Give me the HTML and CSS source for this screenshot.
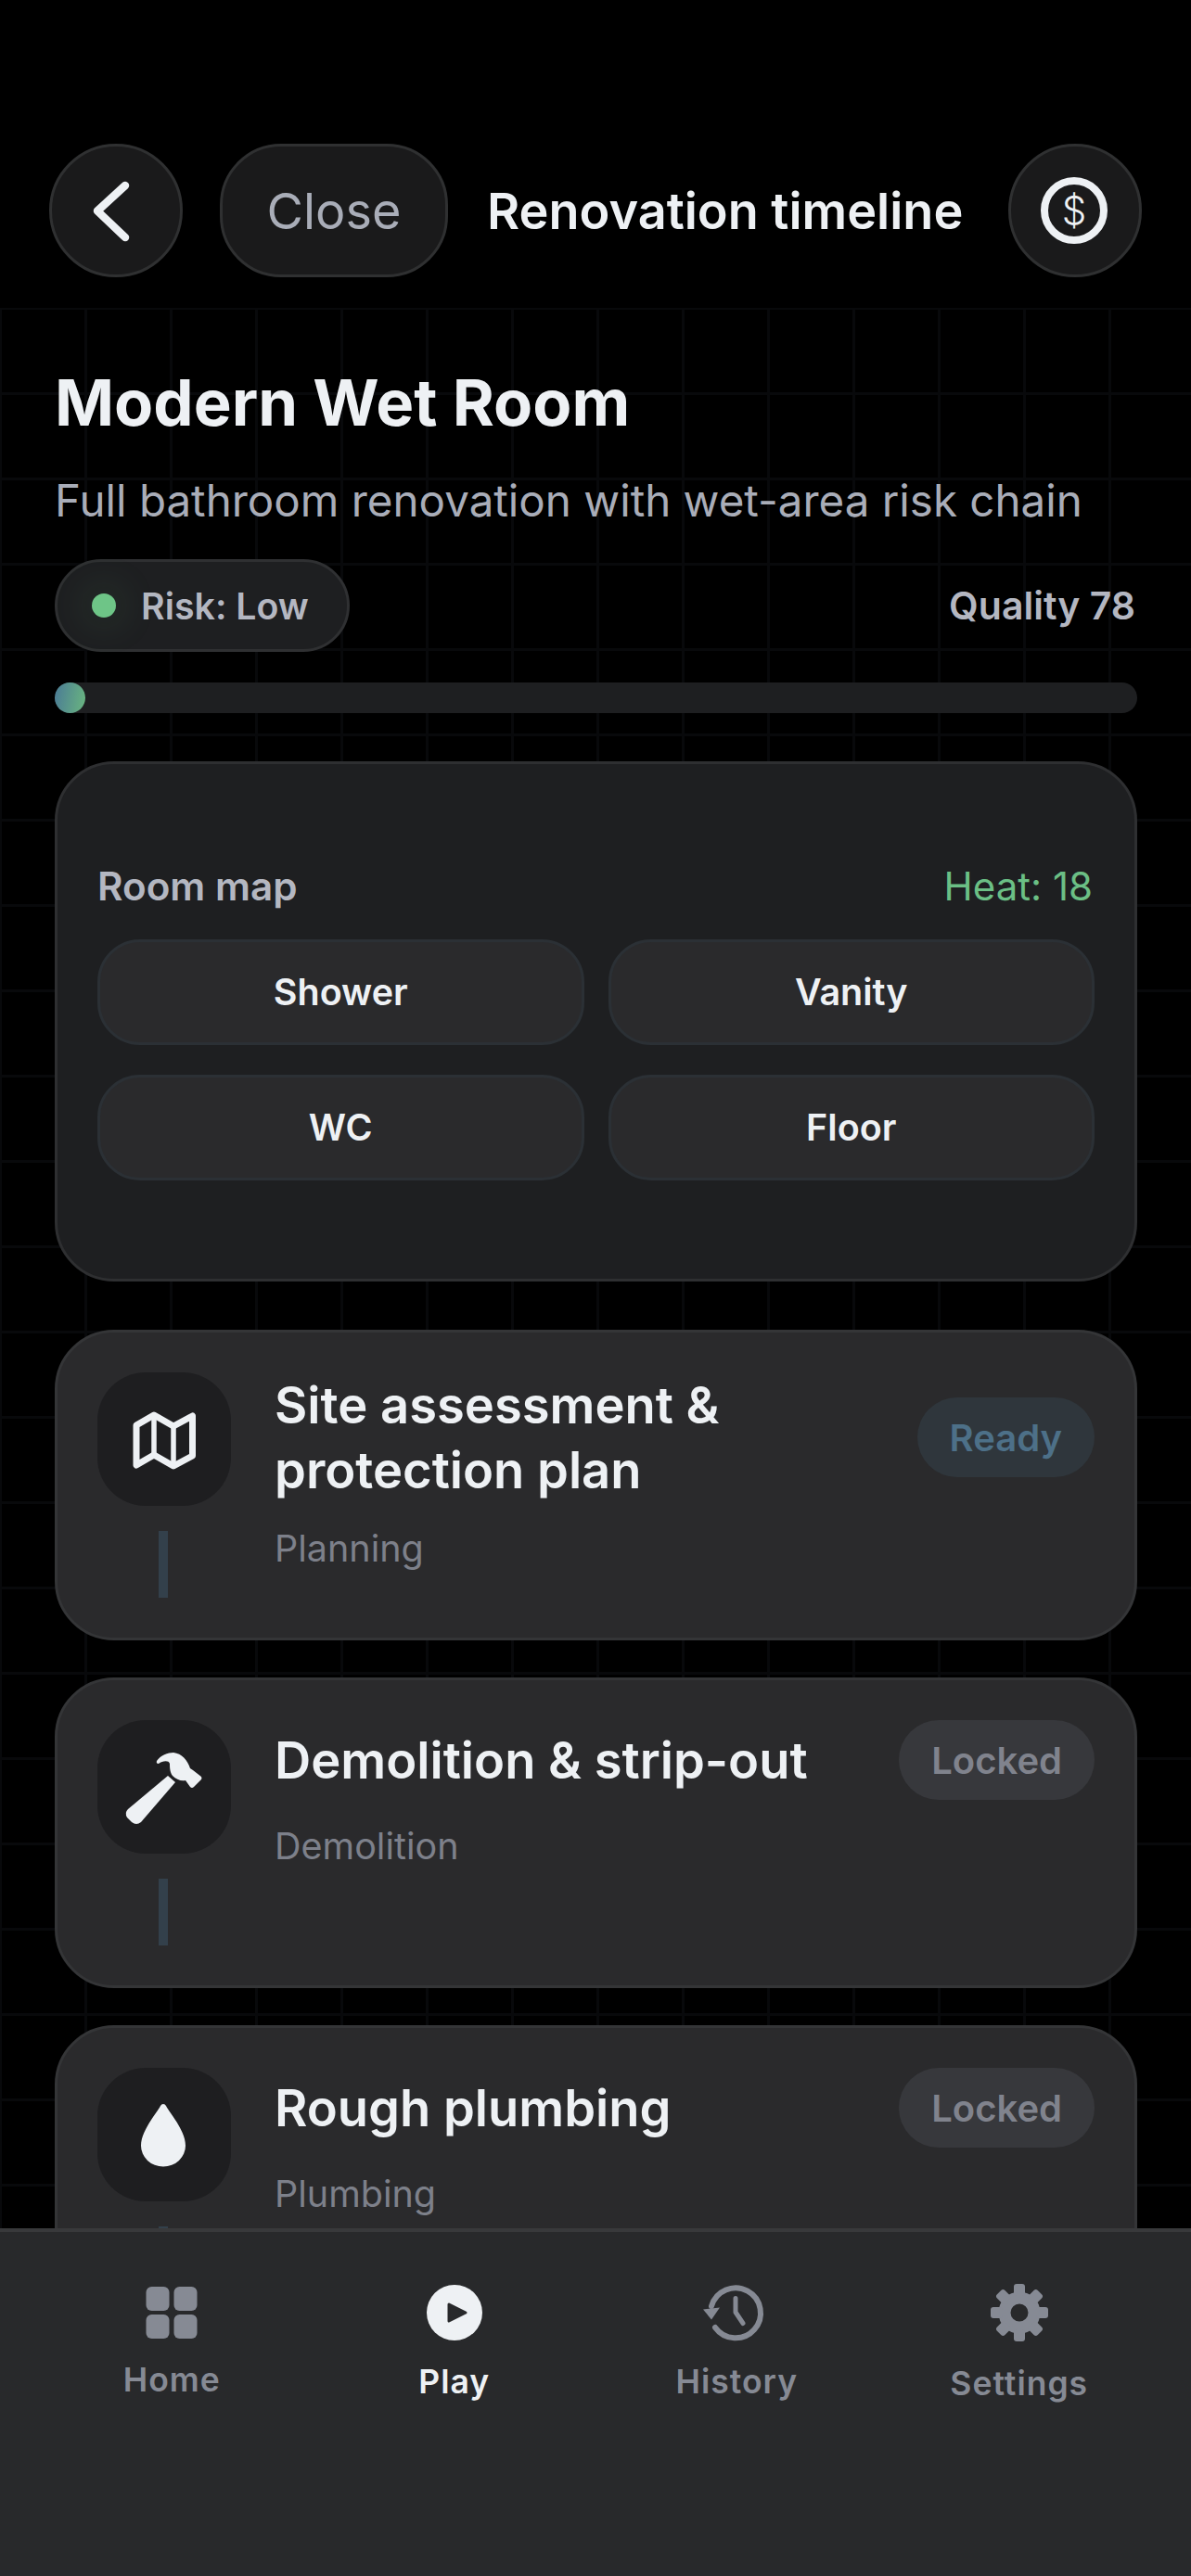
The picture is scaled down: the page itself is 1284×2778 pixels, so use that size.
FILE: index.html
```html
<!DOCTYPE html>
<html lang="en">
<head>
<meta charset="utf-8">
<title>Renovation timeline</title>
<link rel="stylesheet" href="styles.css">
</head>
<body>
<div class="app">
  <header class="topbar">
    <button class="round-btn" aria-label="Back">
      <svg class="fill-icon" viewBox="0 0 144 144"><path class="stroke-icon back-chevron" d="M82 45 L52 72.500 L82 101"/></svg>
    </button>
    <button class="close-btn">Close</button>
    <div class="screen-title">Renovation timeline</div>
    <button class="round-btn push-right" aria-label="Budget">
      <svg class="fill-icon" viewBox="0 0 144 144">
        <circle class="stroke-icon coin-ring" cx="71" cy="72" r="32"/>
        <text class="coin-sign" x="71" y="87">$</text>
      </svg>
    </button>
  </header>

  <main class="content">
    <h1 class="project-name">Modern Wet Room</h1>
    <p class="project-desc">Full bathroom renovation with wet-area risk chain</p>

    <div class="status-row">
      <div class="risk-pill"><span class="risk-dot"></span>Risk: Low</div>
      <div class="quality">Quality 78</div>
    </div>

    <div class="progress"><div class="progress-fill"></div></div>

    <section class="room-map">
      <div class="room-map-head">
        <span class="room-map-label">Room map</span>
        <span class="room-map-heat">Heat: 18</span>
      </div>
      <div class="room-grid">
        <div class="room-tile">Shower</div>
        <div class="room-tile">Vanity</div>
        <div class="room-tile">WC</div>
        <div class="room-tile">Floor</div>
      </div>
    </section>

    <article class="step">
      <div class="step-rail">
        <div class="step-icon">
          <svg class="fill-icon" viewBox="0 0 144 144">
            <path class="stroke-icon map-outline" d="M42 57 L61 46 L82 58 L102.500 47 V90 L82 101 L61 89 L42 100 Z"/>
            <path class="stroke-icon map-fold" d="M61 46 V89 M82 58 V101"/>
          </svg>
        </div>
        <div class="step-line"></div>
      </div>
      <div class="step-body">
        <div class="step-head">
          <h2 class="step-title">Site assessment &amp; protection plan</h2>
          <span class="badge badge-ready">Ready</span>
        </div>
        <div class="step-cat">Planning</div>
      </div>
    </article>

    <article class="step">
      <div class="step-rail">
        <div class="step-icon">
          <svg class="fill-icon" viewBox="0 0 144 144">
            <path class="solid-icon" d="M64 44 C68 38 76 35 82 35 C91 36 97 43 100 52 L103 54 L112 61 Q113 63 112 64 L104 72 Q102 74 100 72 L95 65 C90 66 85 64 81 60 C78 56 78 50 78 47 C77 43 70 44 66 47 Q63 47 64 44 Z"/>
            <path class="solid-icon" d="M76 60 L84 67 L47 110 Q42 114 37 110 L32 105 Q29 100 33 96 Z"/>
          </svg>
        </div>
        <div class="step-line"></div>
      </div>
      <div class="step-body">
        <div class="step-head">
          <h2 class="step-title">Demolition &amp; strip-out</h2>
          <span class="badge badge-locked">Locked</span>
        </div>
        <div class="step-cat">Demolition</div>
      </div>
    </article>

    <article class="step">
      <div class="step-rail">
        <div class="step-icon">
          <svg class="fill-icon" viewBox="0 0 144 144">
            <path class="solid-icon" d="M71 39 Q73 39 74 41 C79 50 95 68 95 84 A24 22.500 0 0 1 47 84 C47 68 63 50 68 41 Q69 39 71 39 Z"/>
          </svg>
        </div>
        <div class="step-line"></div>
      </div>
      <div class="step-body">
        <div class="step-head">
          <h2 class="step-title">Rough plumbing</h2>
          <span class="badge badge-locked">Locked</span>
        </div>
        <div class="step-cat">Plumbing</div>
      </div>
    </article>
  </main>

  <nav class="tabbar">
    <div class="tab tab-home">
      <svg class="tab-icon" viewBox="0 0 64 64">
        <rect class="tab-glyph" x="4.500" y="4" width="25" height="26" rx="6"/>
        <rect class="tab-glyph" x="34.500" y="4" width="25" height="26" rx="6"/>
        <rect class="tab-glyph" x="4.500" y="34" width="25" height="26" rx="6"/>
        <rect class="tab-glyph" x="34.500" y="34" width="25" height="26" rx="6"/>
      </svg>
      <span class="tab-label">Home</span>
    </div>
    <div class="tab tab-active">
      <svg class="tab-icon" viewBox="0 0 64 64">
        <circle class="tab-glyph" cx="32" cy="32" r="30"/>
        <path class="play-triangle" d="M26 23 L44 32 L26 41 Z"/>
      </svg>
      <span class="tab-label">Play</span>
    </div>
    <div class="tab">
      <svg class="tab-icon" viewBox="0 0 64 64">
        <path class="tab-line" d="M5 25 A27 27 0 1 1 9 48"/>
        <path class="tab-glyph" d="M-4 28.500 L14 26.500 L5 39.500 Z"/>
        <path class="tab-line tab-hand" d="M31 16.500 V31.500 L39 43.500"/>
      </svg>
      <span class="tab-label">History</span>
    </div>
    <div class="tab tab-settings">
      <svg class="tab-icon" viewBox="-32 -32 64 64">
        <circle class="gear-ring" r="16"/>
        <rect class="tab-glyph" x="-6" y="-31" width="12" height="13" rx="3"/>
        <rect class="tab-glyph" x="-6" y="-31" width="12" height="13" rx="3" transform="rotate(45)"/>
        <rect class="tab-glyph" x="-6" y="-31" width="12" height="13" rx="3" transform="rotate(90)"/>
        <rect class="tab-glyph" x="-6" y="-31" width="12" height="13" rx="3" transform="rotate(135)"/>
        <rect class="tab-glyph" x="-6" y="-31" width="12" height="13" rx="3" transform="rotate(180)"/>
        <rect class="tab-glyph" x="-6" y="-31" width="12" height="13" rx="3" transform="rotate(225)"/>
        <rect class="tab-glyph" x="-6" y="-31" width="12" height="13" rx="3" transform="rotate(270)"/>
        <rect class="tab-glyph" x="-6" y="-31" width="12" height="13" rx="3" transform="rotate(315)"/>
      </svg>
      <span class="tab-label">Settings</span>
    </div>
  </nav>
</div>
</body>
</html>
```

FILE: styles.css
```css
* {
  box-sizing: border-box;
}

html,
body {
  margin: 0;
  background: #000;
}

.app {
  width: 1284px;
  height: 2778px;
  display: flex;
  flex-direction: column;
  overflow: hidden;
  font-family: Inter, "Liberation Sans", sans-serif;
  color: #eef1f4;
}

/* Top bar */
.topbar {
  flex: none;
  height: 332px;
  padding: 155px 53px 33px;
  display: flex;
  align-items: flex-start;
  background: #000;
}

.round-btn,
.close-btn {
  height: 144px;
  padding: 0;
  background: #1a1a1b;
  border: 3px solid #2f3031;
  font-family: inherit;
}

.round-btn {
  width: 144px;
  border-radius: 50%;
  flex: none;
}

.fill-icon {
  display: block;
  width: 144px;
  height: 144px;
  margin: -3px;
}

.close-btn {
  width: 246px;
  margin-left: 40px;
  border-radius: 66px;
  color: #a9adb8;
  font-size: 54px;
  font-weight: 400;
}

.screen-title {
  margin-left: 42px;
  font-size: 54px;
  font-weight: 600;
  line-height: 146px;
  white-space: nowrap;
}

.push-right {
  margin-left: auto;
}

.stroke-icon {
  fill: none;
  stroke: #eef1f4;
  stroke-linecap: round;
  stroke-linejoin: round;
}

.solid-icon {
  fill: #eef1f4;
}

.back-chevron {
  stroke-width: 8.500;
}

.coin-ring {
  stroke-width: 8;
}

.coin-sign {
  fill: #eef1f4;
  font-family: Inter, sans-serif;
  font-size: 42px;
  font-weight: 300;
  text-anchor: middle;
}

.content {
  flex: 1;
  min-height: 0;
  overflow: hidden;
  padding: 0 58px 0 59px;
  background-color: #000;
  background-image:
    linear-gradient(#08090b 3px, transparent 3px),
    linear-gradient(90deg, #08090b 3px, transparent 3px);
  background-size: 92px 92px;
  background-position: 0 -1px, -1px 0;
}

.project-name {
  margin: 62px 0 0;
  font-size: 68.800px;
  font-weight: 700;
  line-height: 80px;
}

.project-desc {
  margin: 36px 0 0;
  font-size: 47.500px;
  font-weight: 400;
  line-height: 60px;
  color: #a9adb8;
}

.status-row {
  margin-top: 33px;
  display: flex;
  align-items: center;
  justify-content: space-between;
}

.risk-pill {
  width: 318px;
  height: 100px;
  padding-left: 37px;
  display: flex;
  align-items: center;
  gap: 27px;
  background: #1e1f21;
  border: 3px solid #2f3032;
  border-radius: 50px;
  font-size: 39.300px;
  font-weight: 600;
  color: #b4b7c1;
}

.risk-dot {
  width: 26px;
  height: 26px;
  border-radius: 50%;
  background: #6ec587;
  box-shadow: 0 0 40px 12px rgba(110, 197, 135, 0.09);
}

.quality {
  padding-right: 2px;
  font-size: 41px;
  font-weight: 600;
  color: #b4b7c1;
}

.progress {
  margin-top: 33px;
  height: 33px;
  background: #1e1f21;
  border-radius: 17px;
}

.progress-fill {
  width: 33px;
  height: 33px;
  border-radius: 50%;
  background: linear-gradient(100deg, #4a7a96, #6ab67f);
}

/* Room map */
.room-map {
  margin-top: 52px;
  height: 561px;
  padding: 108px 43px;
  background: #1e1f21;
  border: 3px solid #2e2f31;
  border-radius: 64px;
}

.room-map-head {
  display: flex;
  align-items: center;
  justify-content: space-between;
  height: 46px;
  padding-right: 2px;
}

.room-map-label {
  font-size: 42.200px;
  font-weight: 600;
  color: #b4b7c1;
}

.room-map-heat {
  font-size: 42px;
  font-weight: 400;
  color: #6bbf85;
}

.room-grid {
  margin-top: 35px;
  display: grid;
  grid-template-columns: 1fr 1fr;
  gap: 32px 26px;
}

.room-tile {
  height: 114px;
  display: flex;
  align-items: center;
  justify-content: center;
  background: #2a2a2c;
  border: 3px solid #2b3035;
  border-radius: 46px;
  font-size: 39.500px;
  font-weight: 600;
}

/* Timeline steps */
.step {
  margin-top: 40px;
  height: 335px;
  padding: 43px 43px;
  display: flex;
  gap: 47px;
  background: #2a2a2c;
  border: 3px solid #343537;
  border-radius: 64px;
}

.room-map + .step {
  margin-top: 52px;
}

.step-rail {
  flex: none;
  width: 144px;
  display: flex;
  flex-direction: column;
  align-items: center;
}

.step-icon {
  width: 144px;
  height: 144px;
  flex: none;
  background: #1e1e20;
  border-radius: 52px;
}

.step-icon .fill-icon {
  margin: 0;
}

.step-line {
  flex: none;
  width: 10px;
  height: 72px;
  margin-top: 27px;
  margin-right: 2px;
  background: #33404b;
}

.map-outline {
  stroke-width: 7;
}

.map-fold {
  stroke-width: 5.500;
}

.step-body {
  flex: 1;
  min-width: 0;
}

.step-head {
  display: flex;
  align-items: center;
  justify-content: space-between;
  gap: 20px;
}

.step-title {
  margin: 0;
  font-size: 54.300px;
  font-weight: 600;
  line-height: 70px;
}

.badge {
  flex: none;
  height: 86px;
  padding: 0 35px;
  display: flex;
  align-items: center;
  border-radius: 43px;
  font-size: 40px;
  font-weight: 600;
}

.badge-ready {
  background: #2f363c;
  color: #4d7088;
}

.badge-locked {
  background: #37383c;
  color: #80838d;
}

.step-cat {
  margin-top: 27px;
  font-size: 39.500px;
  font-weight: 400;
  line-height: 46px;
  color: #7d808a;
}

/* Bottom navigation */
.tabbar {
  flex: none;
  height: 375px;
  padding: 55px 33px 0;
  display: grid;
  grid-template-columns: repeat(4, 1fr);
  align-items: start;
  background: #28292b;
  border-top: 4px solid #38393b;
}

.tab {
  display: flex;
  flex-direction: column;
  align-items: center;
  color: #868a94;
}

.tab-icon {
  display: block;
  width: 64px;
  height: 64px;
  overflow: visible;
}

.tab-label {
  margin-top: 20px;
  font-size: 35.500px;
  font-weight: 600;
  line-height: 46px;
  letter-spacing: 1px;
}

.tab-home .tab-label {
  margin-top: 18px;
}

.tab-settings .tab-label {
  margin-top: 22px;
}

.tab-active {
  color: #eef1f4;
}

.tab-glyph {
  fill: currentColor;
}

.play-triangle {
  fill: #28292b;
  stroke: #28292b;
  stroke-width: 3;
  stroke-linejoin: round;
}

.tab-line {
  fill: none;
  stroke: currentColor;
  stroke-width: 6;
  stroke-linecap: round;
  stroke-linejoin: round;
}

.tab-hand {
  stroke-width: 5;
}

.gear-ring {
  fill: none;
  stroke: currentColor;
  stroke-width: 13;
}
```
